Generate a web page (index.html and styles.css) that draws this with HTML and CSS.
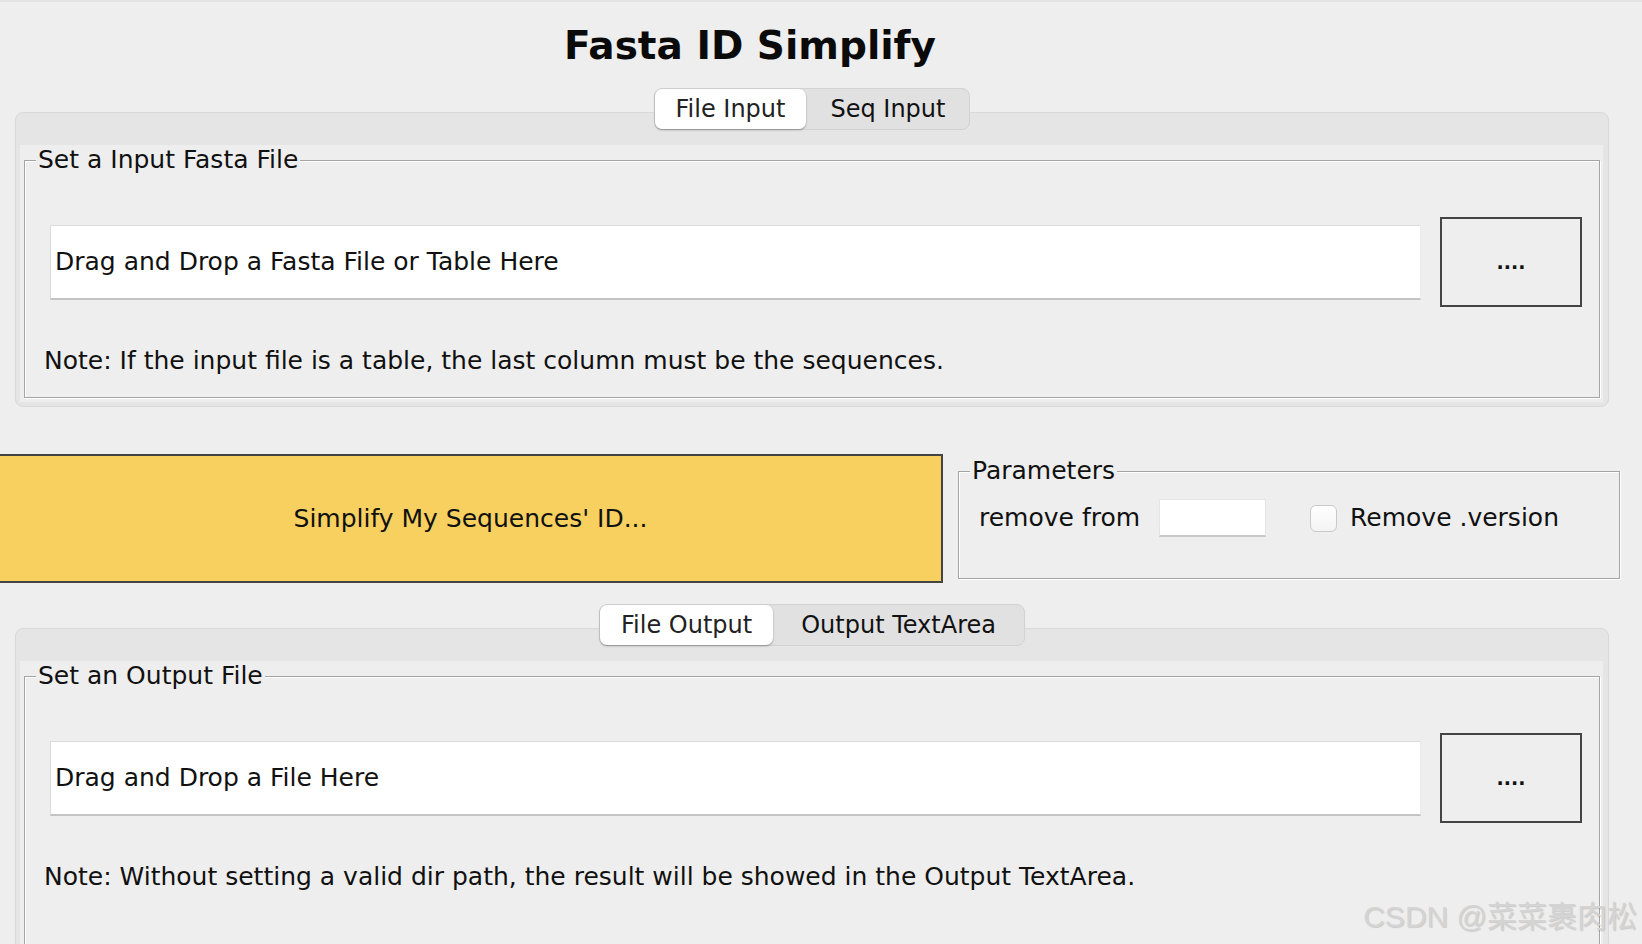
FILE: index.html
```html
<!DOCTYPE html>
<html lang="en">
  <head>
    <meta charset="utf-8" />
    <title>Fasta ID Simplify</title>
    <link rel="stylesheet" href="styles.css">
  </head>

  <body>
    <div class="title">Fasta ID Simplify</div>

    <div class="tab-pane">
      <div class="tab-bar">
        <div class="tab-strip">
          <button type="button" class="tab selected">File Input</button>
          <button type="button" class="tab">Seq Input</button>
        </div>
      </div>
      <div class="tab-panel">
        <div class="tab-content">
          <fieldset class="group">
            <legend>Set a Input Fasta File</legend>
            <div class="file-row">
              <div class="drop-field">Drag and Drop a Fasta File or Table Here</div>
              <button type="button" class="browse">....</button>
            </div>
            <p class="note">Note: If the input file is a table, the last column must be the sequences.</p>
          </fieldset>
        </div>
      </div>
    </div>

    <div class="action-row">
      <button type="button" id="simplifyButton">Simplify My Sequences' ID...</button>
      <fieldset class="group params">
        <legend>Parameters</legend>
        <div class="param-row">
          <label for="removeFrom">remove from</label>
          <input type="text" id="removeFrom" class="small-field">
          <input type="checkbox" id="removeVersion" class="check">
          <label for="removeVersion" class="check-label">Remove .version</label>
        </div>
      </fieldset>
    </div>

    <div class="tab-pane output-pane">
      <div class="tab-bar">
        <div class="tab-strip">
          <button type="button" class="tab selected">File Output</button>
          <button type="button" class="tab wide">Output TextArea</button>
        </div>
      </div>
      <div class="tab-panel">
        <div class="tab-content">
          <fieldset class="group">
            <legend>Set an Output File</legend>
            <div class="file-row">
              <div class="drop-field">Drag and Drop a File Here</div>
              <button type="button" class="browse">....</button>
            </div>
            <p class="note">Note: Without setting a valid dir path, the result will be showed in the Output TextArea.</p>
          </fieldset>
        </div>
      </div>
    </div>

    <div class="watermark">CSDN @菜菜裹肉松</div>
  </body>
</html>
```

FILE: styles.css
```css
html, body {
  overflow: hidden;
}

body {
  margin: 0;
  font-family: "DejaVu Sans", Verdana, sans-serif;
  font-size: 25px;
  color: #111;
  background-color: #eeeeee;
  border-top: 2px solid #e3e3e3;
}

.title {
  padding: 15px 142px 0 0;
  text-align: center;
  font-size: 39px;
  font-weight: bold;
  line-height: 57px;
  color: #0a0a0a;
}

.tab-pane {
  margin: 14px 33px 0 15px;
}

.tab-bar {
  position: relative;
  z-index: 1;
  display: flex;
  justify-content: center;
  margin-bottom: -18px;
}

.tab-strip {
  display: flex;
  background-color: #e1e1e1;
  border: 1px solid #d2d2d2;
  border-radius: 8px;
}

.tab {
  height: 40px;
  padding: 0 24px;
  border: 0;
  border-radius: 7px;
  background: none;
  font: inherit;
  font-size: 24px;
  color: #111;
}

.tab.wide {
  padding: 0 28px;
}

.tab.selected {
  padding: 0 21px;
  background-color: #fff;
  color: #222;
  box-shadow: 0 1px 2px rgba(0, 0, 0, 0.35);
}

.tab-panel {
  padding: 32px 5px 4px 4px;
  background-color: #e5e5e5;
  border: 1px solid #d8d8d8;
  border-radius: 8px;
}

.tab-content {
  padding: 0 3px 4px 4px;
  background-color: #eeeeee;
}

.group {
  margin: 0;
  padding: 0;
  border: 1px solid #a4a4a4;
  box-shadow: inset 1px 1px 0 #fff, 1px 1px 0 #fff;
}

.group legend {
  margin-left: 11px;
  padding: 0 2px;
  line-height: 30px;
  background-color: #eeeeee;
}

.file-row {
  display: flex;
  align-items: center;
  gap: 19px;
  margin: 42px 17px 0 25px;
}

.drop-field {
  flex: 1;
  box-sizing: border-box;
  height: 75px;
  padding-left: 4px;
  line-height: 72px;
  background-color: #fff;
  border: 1px solid #dcdcdc;
  border-right-color: #ececec;
  border-bottom: 2px solid #c4c4c4;
}

.browse {
  box-sizing: border-box;
  width: 142px;
  height: 90px;
  border: 2px solid #444;
  background-color: #eeeeee;
  font: inherit;
  font-size: 19px;
  font-weight: bold;
  color: #111;
}

.note {
  margin: 39px 0 21px 19px;
  line-height: 30px;
}

.action-row {
  display: flex;
  align-items: flex-start;
  margin-top: 47px;
}

#simplifyButton {
  box-sizing: border-box;
  width: 945px;
  height: 129px;
  margin-left: -2px;
  border: 2px solid #444;
  background-color: #f7d05f;
  font: inherit;
  color: #111;
}

.params {
  box-sizing: border-box;
  width: 662px;
  margin-top: 2px;
  margin-left: 15px;
}

.param-row {
  display: flex;
  align-items: center;
  margin: 13px 0 41px 20px;
  line-height: 30px;
}

.small-field {
  box-sizing: border-box;
  width: 107px;
  height: 38px;
  margin: 0 44px 0 19px;
  border: 1px solid #e4e4e4;
  border-bottom: 2px solid #c8c8c8;
  background-color: #fff;
}

.check {
  appearance: none;
  -webkit-appearance: none;
  width: 27px;
  height: 27px;
  margin: 0 13px 0 0;
  border: 1px solid #c9c9c9;
  border-radius: 6px;
  background: linear-gradient(#fff, #f3f3f3);
}

.output-pane {
  margin-top: 21px;
}

.output-pane .note {
  margin-bottom: 90px;
}

/* CSDN watermark over the bottom right corner */
.watermark {
  position: absolute;
  top: 902px;
  right: 5px;
  font-family: "Liberation Sans", "Noto Sans CJK SC", sans-serif;
  font-size: 30px;
  line-height: 1;
  color: #d4d4d4;
  text-shadow: 1px 1px 1px rgba(0, 0, 0, 0.15);
}
```
